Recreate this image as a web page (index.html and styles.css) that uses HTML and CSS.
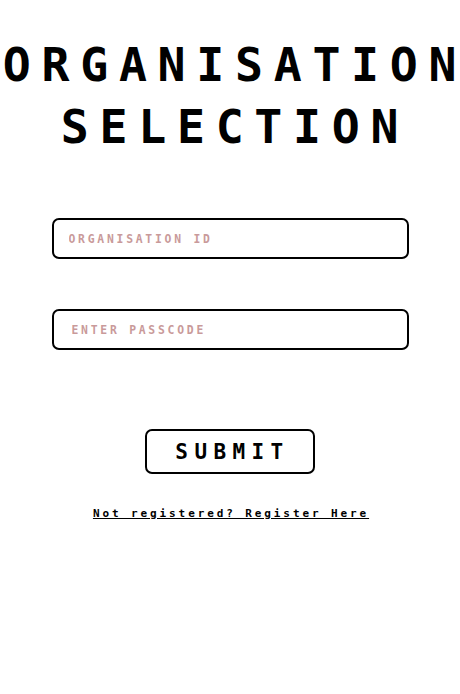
FILE: index.html
```html
<!DOCTYPE html>
<html lang="en">
<head>
<meta charset="utf-8">
<title>Organisation Selection</title>
<link rel="stylesheet" href="styles.css">
</head>
<body>
<main class="page">
  <h1 class="title">ORGANISATION SELECTION</h1>
  <form class="form">
    <input class="field field-id" type="text" placeholder="ORGANISATION ID">
    <input class="field field-pass" type="password" placeholder="ENTER PASSCODE">
    <button class="submit" type="button">SUBMIT</button>
  </form>
  <a class="register" href="#">Not registered? Register Here</a>
</main>
</body>
</html>
```

FILE: styles.css
```css
html, body {
  margin: 0;
  padding: 0;
  background: #ffffff;
}

body {
  font-family: "DejaVu Sans Mono", "Liberation Mono", monospace;
  color: #000;
  overflow-x: hidden;
}

.page {
  display: flex;
  flex-direction: column;
  align-items: center;
  overflow: hidden;
}

.title {
  margin: 35px -30px 0;
  padding-left: 10px;
  align-self: stretch;
  text-align: center;
  font-size: 46.5px;
  line-height: 61.5px;
  font-weight: 700;
  letter-spacing: 10.7px;
}

.form {
  margin-top: 60px;
  display: flex;
  flex-direction: column;
  align-items: center;
}

.field {
  box-sizing: border-box;
  width: 357px;
  height: 41px;
  border: 2px solid #000;
  border-radius: 7px;
  background: #fff;
  font-family: "DejaVu Sans Mono", "Liberation Mono", monospace;
  font-size: 11.4px;
  font-weight: 700;
  letter-spacing: 2.75px;
  color: #000;
  outline: none;
}

.field::placeholder {
  color: #c99a9a;
  opacity: 1;
}

.field-id {
  padding: 0 0 0 15px;
}

.field-pass {
  margin-top: 50px;
  padding: 0 0 0 18px;
}

.submit {
  margin-top: 79px;
  box-sizing: border-box;
  width: 170px;
  height: 45px;
  border: 2px solid #000;
  border-radius: 7px;
  background: #fff;
  padding: 0 0 0 5px;
  font-family: "DejaVu Sans Mono", "Liberation Mono", monospace;
  font-size: 21px;
  font-weight: 700;
  letter-spacing: 6.4px;
  color: #000;
  cursor: pointer;
}

.register {
  margin-top: 33px;
  padding-left: 2px;
  font-size: 11px;
  line-height: 13px;
  font-weight: 700;
  letter-spacing: 2.9px;
  color: #000;
  text-decoration: underline;
}
```
